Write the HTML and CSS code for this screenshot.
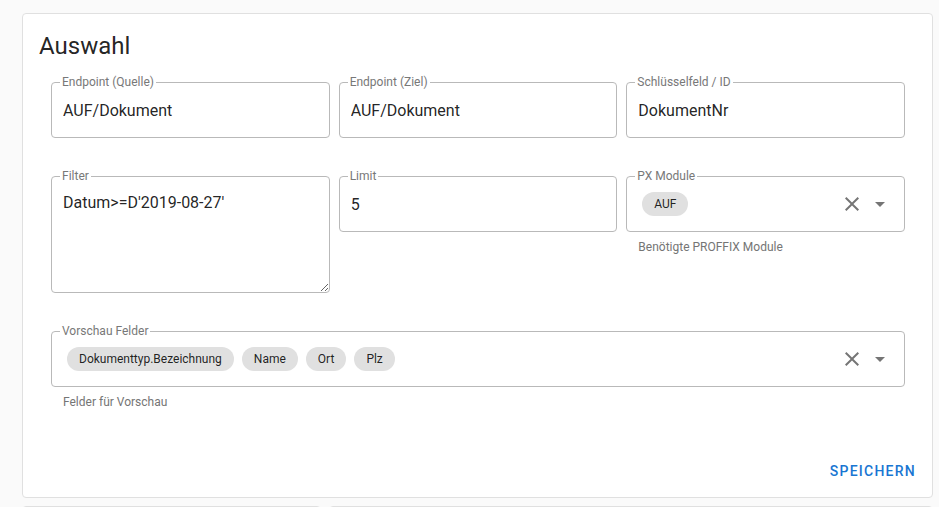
FILE: index.html
```html
<!DOCTYPE html>
<html lang="de">
<head>
<meta charset="utf-8">
<title>Auswahl</title>
<link rel="stylesheet" href="styles.css">
</head>
<body>
<main class="page">
  <section class="card card-main">
    <h2 class="card-title">Auswahl</h2>
    <form class="form">
      <div class="field">
        <label class="field-label">Endpoint (Quelle)</label>
        <input class="box input" type="text" value="AUF/Dokument">
      </div>
      <div class="field">
        <label class="field-label">Endpoint (Ziel)</label>
        <input class="box input" type="text" value="AUF/Dokument">
      </div>
      <div class="field">
        <label class="field-label">Schlüsselfeld / ID</label>
        <input class="box input" type="text" value="DokumentNr">
      </div>

      <div class="field">
        <label class="field-label">Filter</label>
        <textarea class="box textarea">Datum&gt;=D'2019-08-27'</textarea>
      </div>
      <div class="field">
        <label class="field-label">Limit</label>
        <input class="box input" type="text" value="5">
      </div>
      <div class="field">
        <label class="field-label">PX Module</label>
        <div class="box select">
          <div class="chips"><span class="chip">AUF</span></div>
          <span class="icons">
            <svg class="icon" viewBox="0 0 24 24" width="24" height="24"><path d="M19 6.41L17.59 5 12 10.59 6.41 5 5 6.41 10.59 12 5 17.59 6.41 19 12 13.41 17.59 19 19 17.59 13.41 12z"/></svg>
            <svg class="icon" viewBox="0 0 24 24" width="24" height="24"><path d="M7 10l5 5 5-5z"/></svg>
          </span>
        </div>
        <div class="hint">Benötigte PROFFIX Module</div>
      </div>

      <div class="field field-wide">
        <label class="field-label">Vorschau Felder</label>
        <div class="box select">
          <div class="chips">
            <span class="chip">Dokumenttyp.Bezeichnung</span>
            <span class="chip">Name</span>
            <span class="chip">Ort</span>
            <span class="chip">Plz</span>
          </div>
          <span class="icons">
            <svg class="icon" viewBox="0 0 24 24" width="24" height="24"><path d="M19 6.41L17.59 5 12 10.59 6.41 5 5 6.41 10.59 12 5 17.59 6.41 19 12 13.41 17.59 19 19 17.59 13.41 12z"/></svg>
            <svg class="icon" viewBox="0 0 24 24" width="24" height="24"><path d="M7 10l5 5 5-5z"/></svg>
          </span>
        </div>
        <div class="hint">Felder für Vorschau</div>
      </div>
    </form>
    <div class="actions">
      <button class="btn-text" type="button">Speichern</button>
    </div>
  </section>
  <div class="lower">
    <section class="card card-lower"></section>
    <section class="card card-lower"></section>
  </div>
</main>
</body>
</html>
```

FILE: styles.css
```css
html {
  overflow: hidden;
}

body {
  margin: 0;
  padding: 13px 6px 0 22px;
  background: #fafafa;
  font-family: Roboto, "Liberation Sans", Arial, sans-serif;
  color: rgba(0, 0, 0, 0.87);
}

.card {
  background: #fff;
  border: 1px solid #e0e0e0;
  border-radius: 4px;
  box-sizing: border-box;
}

.card-main {
  height: 485px;
  display: flex;
  flex-direction: column;
}

.card-title {
  margin: 0;
  padding: 16px 16px 16px;
  font-size: 24px;
  line-height: 32px;
  font-weight: 400;
  color: rgba(0, 0, 0, 0.87);
}

.form {
  display: grid;
  grid-template-columns: repeat(3, 1fr);
  column-gap: 9px;
  row-gap: 38px;
  align-items: start;
  padding: 4px 27px 0 28px;
}

.field {
  position: relative;
  min-width: 0;
}

.field-wide {
  grid-column: 1 / -1;
}

.field-label {
  position: absolute;
  top: -7px;
  left: 9px;
  z-index: 1;
  padding: 0 2px;
  background: #fff;
  font-size: 12px;
  line-height: 14px;
  color: #787878;
  white-space: nowrap;
}

.box {
  display: block;
  width: 100%;
  box-sizing: border-box;
  border: 1px solid #b9b9b9;
  border-radius: 4px;
  background: #fff;
  margin: 0;
}

.input {
  height: 56px;
  padding: 0 11px;
  font-family: Roboto, "Liberation Sans", Arial, sans-serif;
  font-size: 16px;
  color: rgba(0, 0, 0, 0.87);
  outline: none;
}

.textarea {
  height: 117px;
  padding: 16px 11px;
  font-family: Roboto, "Liberation Sans", Arial, sans-serif;
  font-size: 16px;
  line-height: 20px;
  color: rgba(0, 0, 0, 0.87);
  outline: none;
  resize: vertical;
}

.select {
  height: 56px;
  display: flex;
  align-items: center;
  padding: 0 12px 0 11px;
}

.chips {
  flex: 1;
  display: flex;
  align-items: center;
  gap: 8px;
  padding-left: 4px;
}

.chip {
  display: inline-flex;
  align-items: center;
  height: 24px;
  padding: 0 12px;
  border-radius: 12px;
  background: #e0e0e0;
  font-size: 12px;
  color: rgba(0, 0, 0, 0.87);
  white-space: nowrap;
}

.icons {
  display: flex;
  align-items: center;
  gap: 4px;
}

.icon {
  display: block;
  fill: rgba(0, 0, 0, 0.54);
}

.hint {
  margin-top: 8px;
  padding: 0 12px;
  font-size: 12px;
  line-height: 14px;
  color: #757575;
}

.actions {
  margin-top: auto;
  display: flex;
  justify-content: flex-end;
  padding: 0 8px 8px;
}

.btn-text {
  height: 36px;
  padding: 0 8px;
  border: none;
  background: none;
  font-family: Roboto, "Liberation Sans", Arial, sans-serif;
  font-size: 14px;
  font-weight: 500;
  letter-spacing: 1.25px;
  text-transform: uppercase;
  color: #1976d2;
  cursor: pointer;
}

.lower {
  display: grid;
  grid-template-columns: 299px 1fr;
  column-gap: 8px;
  margin-top: 8px;
}

.card-lower {
  height: 120px;
}
```
